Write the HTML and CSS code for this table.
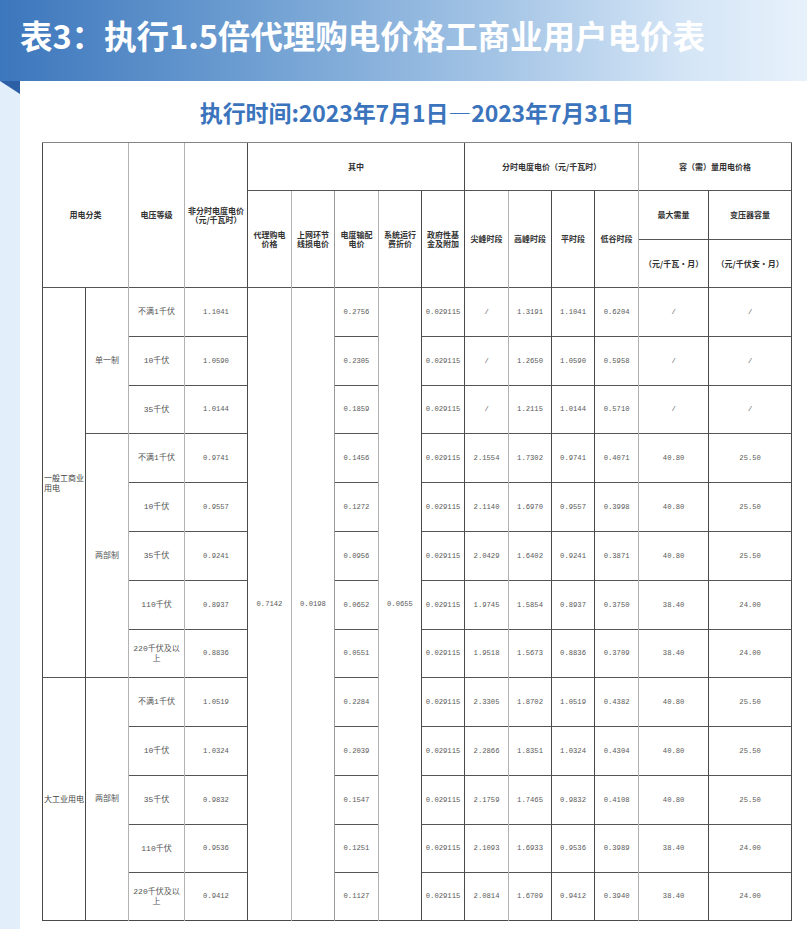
FILE: index.html
```html
<!DOCTYPE html>
<html lang="zh">
<head>
<meta charset="utf-8">
<title>电价表</title>
<link rel="stylesheet" href="styles.css">
</head>
<body>
<header class="banner"><h1>表3：执行1.5倍代理购电价格工商业用户电价表</h1></header>
<div class="main">
  <aside class="strip"><span class="fold"></span></aside>
  <section class="card">
    <h2 class="subtitle">执行时间:2023年7月1日—2023年7月31日</h2>
    <table class="price">
      <colgroup>
        <col class="w43"><col class="w43"><col class="w56"><col class="w63"><col class="w44"><col class="w43"><col class="w44"><col class="w43"><col class="w43"><col class="w44"><col class="w43"><col class="w43"><col class="w44"><col class="w70"><col class="w83">
      </colgroup>
      <thead>
        <tr class="ha">
          <th colspan="2" rowspan="3" class="top">用电分类</th>
          <th rowspan="3" class="top lt">电压等级</th>
          <th rowspan="3" class="top lt">非分时电度电价<br>（元/千瓦时）</th>
          <th colspan="5" class="top">其中</th>
          <th colspan="4" class="top">分时电度电价（元/千瓦时）</th>
          <th colspan="2" class="top lt">容（需）量用电价格</th>
        </tr>
        <tr class="hb">
          <th rowspan="2">代理购电<br>价格</th>
          <th rowspan="2" class="lt">上网环节<br>线损电价</th>
          <th rowspan="2" class="md">电度输配<br>电价</th>
          <th rowspan="2" class="lt">系统运行<br>费折价</th>
          <th rowspan="2">政府性基<br>金及附加</th>
          <th rowspan="2">尖峰时段</th>
          <th rowspan="2" class="lt">高峰时段</th>
          <th rowspan="2">平时段</th>
          <th rowspan="2">低谷时段</th>
          <th class="lt">最大需量</th>
          <th>变压器容量</th>
        </tr>
        <tr class="hc">
          <th class="lt">（元/千瓦·月）</th>
          <th>（元/千伏安·月）</th>
        </tr>
      </thead>
      <tbody>
        <tr>
          <td rowspan="8" class="cat">一般工商业用电</td>
          <td rowspan="3" class="zh">单一制</td>
          <td class="zh lt">不满1千伏</td><td class="lt">1.1041</td>
          <td rowspan="13">0.7142</td><td rowspan="13" class="lt">0.0198</td>
          <td class="md">0.2756</td>
          <td rowspan="13" class="lt">0.0655</td>
          <td>0.029115</td><td>/</td><td class="lt">1.3191</td><td>1.1041</td><td>0.6204</td><td class="lt">/</td><td>/</td>
        </tr>
        <tr>
          <td class="zh lt">10千伏</td><td class="lt">1.0590</td><td class="md">0.2305</td>
          <td>0.029115</td><td>/</td><td class="lt">1.2650</td><td>1.0590</td><td>0.5958</td><td class="lt">/</td><td>/</td>
        </tr>
        <tr class="r48">
          <td class="zh lt">35千伏</td><td class="lt">1.0144</td><td class="md">0.1859</td>
          <td>0.029115</td><td>/</td><td class="lt">1.2115</td><td>1.0144</td><td>0.5710</td><td class="lt">/</td><td>/</td>
        </tr>
        <tr>
          <td rowspan="5" class="zh">两部制</td>
          <td class="zh lt">不满1千伏</td><td class="lt">0.9741</td><td class="md">0.1456</td>
          <td>0.029115</td><td>2.1554</td><td class="lt">1.7302</td><td>0.9741</td><td>0.4071</td><td class="lt">40.80</td><td>25.50</td>
        </tr>
        <tr>
          <td class="zh lt">10千伏</td><td class="lt">0.9557</td><td class="md">0.1272</td>
          <td>0.029115</td><td>2.1140</td><td class="lt">1.6970</td><td>0.9557</td><td>0.3998</td><td class="lt">40.80</td><td>25.50</td>
        </tr>
        <tr>
          <td class="zh lt">35千伏</td><td class="lt">0.9241</td><td class="md">0.0956</td>
          <td>0.029115</td><td>2.0429</td><td class="lt">1.6402</td><td>0.9241</td><td>0.3871</td><td class="lt">40.80</td><td>25.50</td>
        </tr>
        <tr>
          <td class="zh lt">110千伏</td><td class="lt">0.8937</td><td class="md">0.0652</td>
          <td>0.029115</td><td>1.9745</td><td class="lt">1.5854</td><td>0.8937</td><td>0.3750</td><td class="lt">38.40</td><td>24.00</td>
        </tr>
        <tr class="r48">
          <td class="zh lt">220千伏及以上</td><td class="lt">0.8836</td><td class="md">0.0551</td>
          <td>0.029115</td><td>1.9518</td><td class="lt">1.5673</td><td>0.8836</td><td>0.3709</td><td class="lt">38.40</td><td>24.00</td>
        </tr>
        <tr>
          <td rowspan="5" class="cat">大工业用电</td>
          <td rowspan="5" class="zh">两部制</td>
          <td class="zh lt">不满1千伏</td><td class="lt">1.0519</td><td class="md">0.2284</td>
          <td>0.029115</td><td>2.3305</td><td class="lt">1.8702</td><td>1.0519</td><td>0.4382</td><td class="lt">40.80</td><td>25.50</td>
        </tr>
        <tr>
          <td class="zh lt">10千伏</td><td class="lt">1.0324</td><td class="md">0.2039</td>
          <td>0.029115</td><td>2.2866</td><td class="lt">1.8351</td><td>1.0324</td><td>0.4304</td><td class="lt">40.80</td><td>25.50</td>
        </tr>
        <tr>
          <td class="zh lt">35千伏</td><td class="lt">0.9832</td><td class="md">0.1547</td>
          <td>0.029115</td><td>2.1759</td><td class="lt">1.7465</td><td>0.9832</td><td>0.4108</td><td class="lt">40.80</td><td>25.50</td>
        </tr>
        <tr class="r48">
          <td class="zh lt">110千伏</td><td class="lt">0.9536</td><td class="md">0.1251</td>
          <td>0.029115</td><td>2.1093</td><td class="lt">1.6933</td><td>0.9536</td><td>0.3989</td><td class="lt">38.40</td><td>24.00</td>
        </tr>
        <tr class="r48">
          <td class="zh lt">220千伏及以上</td><td class="lt">0.9412</td><td class="md">0.1127</td>
          <td>0.029115</td><td>2.0814</td><td class="lt">1.6709</td><td>0.9412</td><td>0.3940</td><td class="lt">38.40</td><td>24.00</td>
        </tr>
      </tbody>
    </table>
  </section>
</div>
</body>
</html>
```

FILE: styles.css
```css
html, body {
  margin: 0;
  padding: 0;
  background: #ffffff;
  font-family: "Noto Sans CJK SC", "Liberation Sans", sans-serif;
}

.banner {
  height: 81px;
  box-sizing: border-box;
  padding-left: 20px;
  padding-bottom: 10px;
  display: flex;
  align-items: center;
  background: linear-gradient(90deg, #3c76bc 0%, #6c9dd1 30%, #a5c5e6 62%, #d4e5f6 85%, #e7f1fb 100%);
}

.banner h1 {
  margin: 0;
  color: #ffffff;
  font-size: 32.6px;
  font-weight: 700;
  line-height: 1;
  letter-spacing: -0.1px;
}

.main {
  display: flex;
  height: 848px;
}

.strip {
  width: 20px;
  flex: none;
  background: #e2eefa;
  position: relative;
}

.fold {
  position: absolute;
  top: 0;
  left: 0;
  width: 0;
  height: 0;
  border-top: 13px solid #2c5fa6;
  border-left: 20px solid transparent;
}

.card {
  flex: 1;
  background: #ffffff;
  padding-left: 22px;
}

.subtitle {
  margin: 0;
  width: 750px;
  height: 61px;
  display: flex;
  align-items: center;
  justify-content: center;
  color: #3b74bc;
  font-size: 23px;
  font-weight: 700;
  letter-spacing: -0.1px;
}

.price {
  width: 749px;
  table-layout: fixed;
  border-collapse: collapse;
  border-right: 1px solid #4a4a4a;
  border-bottom: 1px solid #4a4a4a;
  font-family: "Liberation Mono", "Noto Sans CJK SC", monospace;
  font-size: 7.2px;
  color: #5a5a5a;
}

.w43 { width: 43px; }
.w44 { width: 44px; }
.w56 { width: 56px; }
.w63 { width: 63px; }
.w70 { width: 70px; }
.w83 { width: 83px; }

.price th,
.price td {
  padding: 0 2px;
  text-align: center;
  vertical-align: middle;
  border-left: 1px solid #4a4a4a;
  border-top: 1px solid #555555;
  border-right: none;
  border-bottom: none;
  line-height: 1.15;
}

.price th {
  font-family: "Noto Sans CJK SC", sans-serif;
  font-size: 8px;
  font-weight: 700;
  color: #333333;
  white-space: nowrap;
}

.price th.top {
  border-top-color: #858585;
}

.price .lt {
  border-left-color: #b2b2b2;
}

.price .md {
  border-left-color: #9a9a9a;
}

.ha { height: 48px; }
.hb { height: 49px; }
.hc { height: 48px; }

.price tbody tr { height: 49px; }
.price tbody tr.r48 { height: 48px; }

.price td.zh {
  font-family: "Liberation Mono", "Noto Sans CJK SC", monospace;
  font-size: 8px;
  color: #555555;
}

.price td.cat {
  font-family: "Noto Sans CJK SC", sans-serif;
  font-size: 8px;
  color: #444444;
  text-align: left;
  padding: 0 1px;
}
```
